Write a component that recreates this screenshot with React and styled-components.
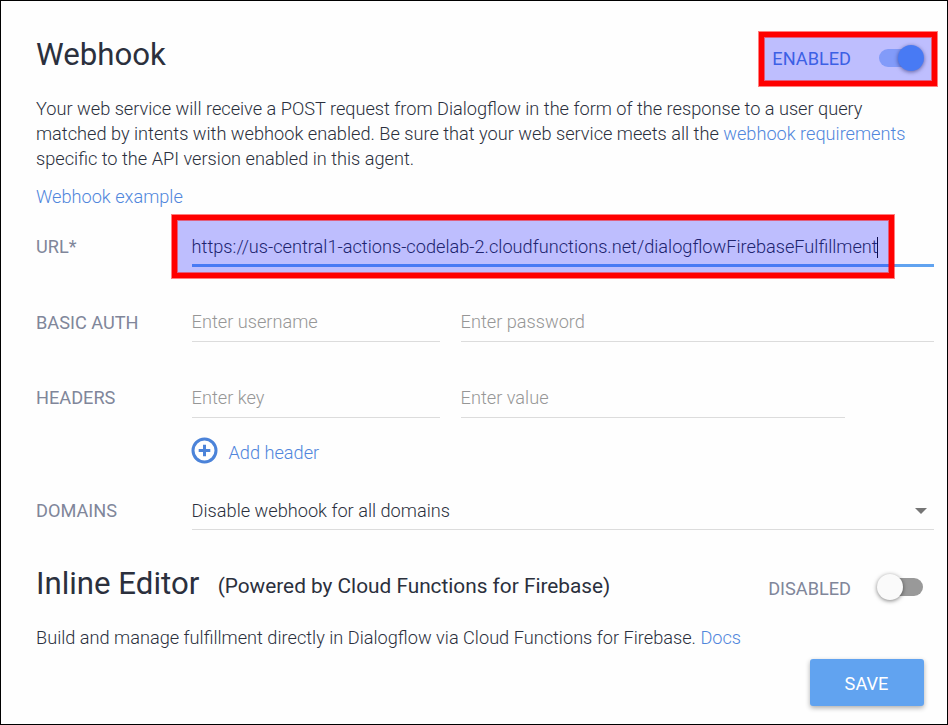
import React from "react";
import styled, { createGlobalStyle } from "styled-components";

const GlobalStyle = createGlobalStyle`
  * { box-sizing: border-box; }
  body { margin: 0; background: #fefefe; }
`;

const Page = styled.main`
  position: relative;
  width: 948px;
  height: 725px;
  overflow: hidden;
  border: 1px solid #000;
  background: #fefefe;
  padding: 0 13px 0 35px;
  color: #2b303d;
  font-family: Roboto, "Liberation Sans", sans-serif;
  font-size: 18.18px;
  font-weight: 300;
  line-height: 25px;
  white-space: nowrap;
`;

const SectionHeader = styled.header`
  display: flex;
  align-items: flex-start;
  height: 95px;
  padding-top: 36px;
`;

const Title = styled.h1`
  margin: 0;
  font-size: 31.2px;
  font-weight: 400;
  line-height: 36px;
`;

const Subtitle = styled.span`
  margin: 8px 0 0 18.4px;
  font-size: 20.8px;
  font-weight: 400;
  line-height: 24px;
`;

const Switch = styled.div`
  display: flex;
  align-items: center;
  gap: 28px;
  height: 26px;
  margin: 8px 11px 0 auto;
`;

const SwitchLabel = styled.span`
  padding-top: ${(p) => (p.$on ? 1 : 2)}px;
  color: ${(p) => (p.$on ? "#5181dc" : "#80869a")};
  font-weight: 400;
`;

const Track = styled.div`
  display: flex;
  align-items: center;
  justify-content: ${(p) => (p.$on ? "flex-end" : "flex-start")};
  width: 44px;
  height: 18px;
  border-radius: 9px;
  background: ${(p) => (p.$on ? "#aecff7" : "#999")};
`;

const Thumb = styled.div`
  flex: none;
  width: 26px;
  height: 26px;
  margin: 0 -1px -1px -2px;
  margin-bottom: 0;
  border-radius: 50%;
  background: ${(p) => (p.$on ? "#61a3f0" : "#fafafa")};
  box-shadow: 0 1px 4px rgba(0, 0, 0, 0.5);
`;

const Paragraph = styled.p`
  margin: 0;
`;

const Link = styled.a`
  color: #5086dc;
  text-decoration: none;
`;

const ExampleLink = styled(Link)`
  display: block;
  height: 25px;
  margin-top: 13px;
`;

const Row = styled.div`
  display: grid;
  grid-template-columns: 156px minmax(0, 1fr);
  height: ${(p) => p.$height}px;
  margin-top: ${(p) => p.$gap}px;
`;

const Label = styled.span`
  padding-top: ${(p) => p.$top || 0}px;
  color: #80869a;
  font-weight: 400;
`;

const Fields = styled.div`
  display: flex;
  gap: 21px;
  padding-right: ${(p) => p.$inset || 0}px;
`;

const Field = styled.div`
  flex: ${(p) => (p.$narrow ? "0 0 248px" : "1")};
  border-bottom: ${(p) => (p.$focused ? "3px solid #61a3f0" : "1px solid #dcdcdc")};
  color: ${(p) => (p.$filled ? "#2b303d" : "#969696")};
  text-indent: -0.4px;
`;

const Caret = styled.span`
  display: inline-block;
  width: 1px;
  height: 21px;
  margin-left: -1px;
  background: #111;
  vertical-align: -5px;
`;

const Select = styled(Field)`
  display: flex;
  justify-content: space-between;
  padding-right: 7px;
`;

const Arrow = styled.svg`
  width: 12px;
  height: 6px;
  margin-top: 10px;
`;

const AddHeader = styled.div`
  display: flex;
  align-items: center;
  gap: 10.5px;
  height: 28px;
  margin: 18px 0 0 155px;
  color: #5086dc;
`;

const AddIcon = styled.svg`
  width: 27px;
  height: 27px;
`;

const AddText = styled.span`
  padding-top: 4px;
`;

const SaveButton = styled.button`
  display: block;
  width: 114px;
  height: 47px;
  margin: 9px 10px 0 auto;
  padding: 2px 1px 0 0;
  border: 0;
  border-radius: 3px;
  background: #61a3f0;
  box-shadow: 0 2px 5px rgba(0, 0, 0, 0.32);
  color: #fff;
  font: 400 18.18px Roboto, "Liberation Sans", sans-serif;
`;

const Highlight = styled.div`
  position: absolute;
  left: ${(p) => p.$x}px;
  top: ${(p) => p.$y}px;
  width: ${(p) => p.$w}px;
  height: ${(p) => p.$h}px;
  border: 5px solid #f00;
  background: rgba(0, 0, 255, 0.25);
  background-clip: padding-box;
  box-shadow: 0 0 0 1px rgba(255, 0, 0, 0.5), inset 0 0 0 1px rgba(255, 0, 0, 0.5);
  pointer-events: none;
`;

function Toggle({ on }) {
  return (
    <Switch>
      <SwitchLabel $on={on}>{on ? "ENABLED" : "DISABLED"}</SwitchLabel>
      <Track $on={on}><Thumb $on={on} /></Track>
    </Switch>
  );
}

export default function App() {
  return (
    <>
      <GlobalStyle />
      <Page>
        <SectionHeader>
          <Title>Webhook</Title>
          <Toggle on />
        </SectionHeader>
        <Paragraph>
          Your web service will receive a POST request from Dialogflow in the form of the response to a user query<br />
          matched by intents with webhook enabled. Be sure that your web service meets all the <Link>webhook requirements</Link><br />
          specific to the API version enabled in this agent.
        </Paragraph>
        <ExampleLink>Webhook example</ExampleLink>

        <Row $height={33} $gap={25}>
          <Label>URL*</Label>
          <Fields>
            <Field $focused $filled>
              https://us-central1-actions-codelab-2.cloudfunctions.net/dialogflowFirebaseFulfillment<Caret />
            </Field>
          </Fields>
        </Row>
        <Row $height={33} $gap={42}>
          <Label $top={1}>BASIC AUTH</Label>
          <Fields>
            <Field $narrow>Enter username</Field>
            <Field>Enter password</Field>
          </Fields>
        </Row>
        <Row $height={33} $gap={43}>
          <Label>HEADERS</Label>
          <Fields $inset={89}>
            <Field $narrow>Enter key</Field>
            <Field>Enter value</Field>
          </Fields>
        </Row>
        <AddHeader>
          <AddIcon viewBox="0 0 27 27" fill="none" stroke="#4b83d9">
            <circle cx="13.5" cy="13.5" r="11.5" strokeWidth="3" />
            <path d="M13.5 7.7v11.6M7.7 13.5h11.6" strokeWidth="3" />
          </AddIcon>
          <AddText>Add header</AddText>
        </AddHeader>
        <Row $height={32} $gap={34}>
          <Label>DOMAINS</Label>
          <Fields>
            <Select $filled>
              Disable webhook for all domains
              <Arrow viewBox="0 0 12 6"><path d="M0 0h12L6 6z" fill="#757575" /></Arrow>
            </Select>
          </Fields>
        </Row>

        <SectionHeader>
          <Title>Inline Editor</Title>
          <Subtitle>(Powered by Cloud Functions for Firebase)</Subtitle>
          <Toggle />
        </SectionHeader>
        <Paragraph>
          Build and manage fulfillment directly in Dialogflow via Cloud Functions for Firebase. <Link>Docs</Link>
        </Paragraph>
        <SaveButton>SAVE</SaveButton>

        <Highlight $x={758} $y={31} $w={178} $h={54} />
        <Highlight $x={171} $y={214} $w={722} $h={63} />
      </Page>
    </>
  );
}
